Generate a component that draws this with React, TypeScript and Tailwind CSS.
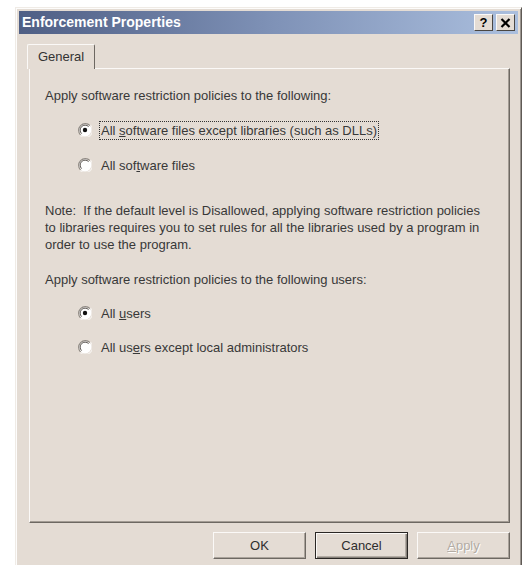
import type { ReactNode } from "react";

function Radio({ checked }: { checked?: boolean }) {
  return (
    <svg width="14" height="14" viewBox="0 0 14 14" className="shrink-0">
      <circle cx="7" cy="7" r="6.5" fill="#ffffff" />
      <path d="M12 2.6 A6.3 6.3 0 0 0 2.6 12" fill="none" stroke="#8d8780" strokeWidth="1.2" />
      <path d="M10.6 3.6 A4.9 4.9 0 0 0 3.6 10.6" fill="none" stroke="#5a5550" strokeWidth="1" />
      <path d="M2.2 12.4 A6.3 6.3 0 0 0 12.4 2.2" fill="none" stroke="#f4f1ee" strokeWidth="1.2" />
      {checked ? <circle cx="7" cy="7" r="2.2" fill="#111111" /> : null}
    </svg>
  );
}

function Option({ checked, focused, children }: { checked?: boolean; focused?: boolean; children: ReactNode }) {
  return (
    <div className="flex h-[20px] items-center gap-[7px]">
      <Radio checked={checked} />
      <span
        className={
          focused
            ? "border border-dotted border-[#333] px-[1px] leading-[17px]"
            : "border border-transparent px-[1px] leading-[17px]"
        }
      >
        {children}
      </span>
    </div>
  );
}

function DialogButton({ children, isDefault, disabled }: { children: ReactNode; isDefault?: boolean; disabled?: boolean }) {
  return (
    <button
      type="button"
      className={
        isDefault
          ? "h-[27px] w-[93px] border border-[#2a2724] bg-[#e4dcd4] shadow-[inset_1px_1px_0_#fbf9f7,inset_-1px_-1px_0_#857f78,inset_-2px_-2px_0_#b3aca4] text-[13px] text-[#2e2e2e]"
          : "h-[27px] w-[93px] border border-t-[#fbf9f7] border-l-[#fbf9f7] border-r-[#6d6862] border-b-[#6d6862] bg-[#e4dcd4] shadow-[inset_-1px_-1px_0_#aaa39b] text-[13px] text-[#2e2e2e]"
      }
    >
      {disabled ? (
        <span className="text-[#b3aca4] [text-shadow:1px_1px_0_#ffffff]">
          <span className="underline">A</span>pply
        </span>
      ) : (
        children
      )}
    </button>
  );
}

export default function App() {
  return (
    <div className="h-[565px] w-[525px] overflow-hidden bg-white pl-[15px] pt-[7px] font-['Liberation_Sans',Arial,sans-serif]">
      <div className="flex h-[620px] w-[507px] flex-col border border-t-[#efebe6] border-l-[#efebe6] border-r-[#5f5a55] border-b-[#5f5a55] bg-[#e4dcd4] p-[3px] shadow-[inset_1px_1px_0_#fdfcfb,inset_-1px_-1px_0_#9b958f]">
        {/* caption */}
        <div className="flex h-[23px] items-center justify-between bg-gradient-to-r from-[#4f5f85] via-[#7e91b6] to-[#abbfde] pl-[3px] pr-[3px]">
          <span className="text-[14px] font-bold text-white">Enforcement Properties</span>
          <div className="flex gap-[3px]">
            <div className="flex h-[17px] w-[19px] items-center justify-center border border-t-[#fbf9f7] border-l-[#fbf9f7] border-r-[#4a4642] border-b-[#4a4642] bg-[#e4dcd4] text-[13px] font-bold leading-none text-black">
              ?
            </div>
            <div className="flex h-[17px] w-[19px] items-center justify-center border border-t-[#fbf9f7] border-l-[#fbf9f7] border-r-[#4a4642] border-b-[#4a4642] bg-[#e4dcd4]">
              <svg width="11" height="10" viewBox="0 0 11 10">
                <path d="M1.5 1 L9.5 9 M9.5 1 L1.5 9" stroke="#000" strokeWidth="2.2" />
              </svg>
            </div>
          </div>
        </div>

        <div className="flex flex-col px-[8px] pt-[9px]">
          {/* tab strip */}
          <div className="relative z-10 flex h-[25px] items-end">
            <div className="-mb-[1px] flex h-[25px] w-[68px] items-center justify-center rounded-t-[2px] border border-b-0 border-t-[#fbf9f7] border-l-[#fbf9f7] border-r-[#6d6862] bg-[#e4dcd4] text-[13px] text-[#333]">
              General
            </div>
          </div>

          {/* tab page */}
          <div className="ml-[2px] flex h-[455px] flex-col border border-t-[#fbf9f7] border-l-[#fbf9f7] border-r-[#6d6862] border-b-[#6d6862] px-[15px] pt-[18px] text-[13px] text-[#383838] shadow-[inset_-1px_-1px_0_#a39c94]">
            <p className="leading-[17px]">Apply software restriction policies to the following:</p>
            <div className="mt-[16px] flex flex-col gap-[15px] pl-[33px]">
              <Option checked focused>
                All <span className="underline">s</span>oftware files except libraries (such as DLLs)
              </Option>
              <Option>
                All sof<span className="underline">t</span>ware files
              </Option>
            </div>
            <p className="mt-[27px] leading-[17px]">
              Note:&nbsp; If the default level is Disallowed, applying software restriction policies to libraries
              requires you to set rules for all the libraries used by a program in order to use the program.
            </p>
            <p className="mt-[18px] leading-[17px]">Apply software restriction policies to the following users:</p>
            <div className="mt-[15px] flex flex-col gap-[14px] pl-[33px]">
              <Option checked>
                All <span className="underline">u</span>sers
              </Option>
              <Option>
                All us<span className="underline">e</span>rs except local administrators
              </Option>
            </div>
          </div>

          {/* buttons */}
          <div className="mt-[9px] flex justify-end gap-[9px]">
            <DialogButton>OK</DialogButton>
            <DialogButton isDefault>Cancel</DialogButton>
            <DialogButton disabled>Apply</DialogButton>
          </div>
        </div>
      </div>
    </div>
  );
}
